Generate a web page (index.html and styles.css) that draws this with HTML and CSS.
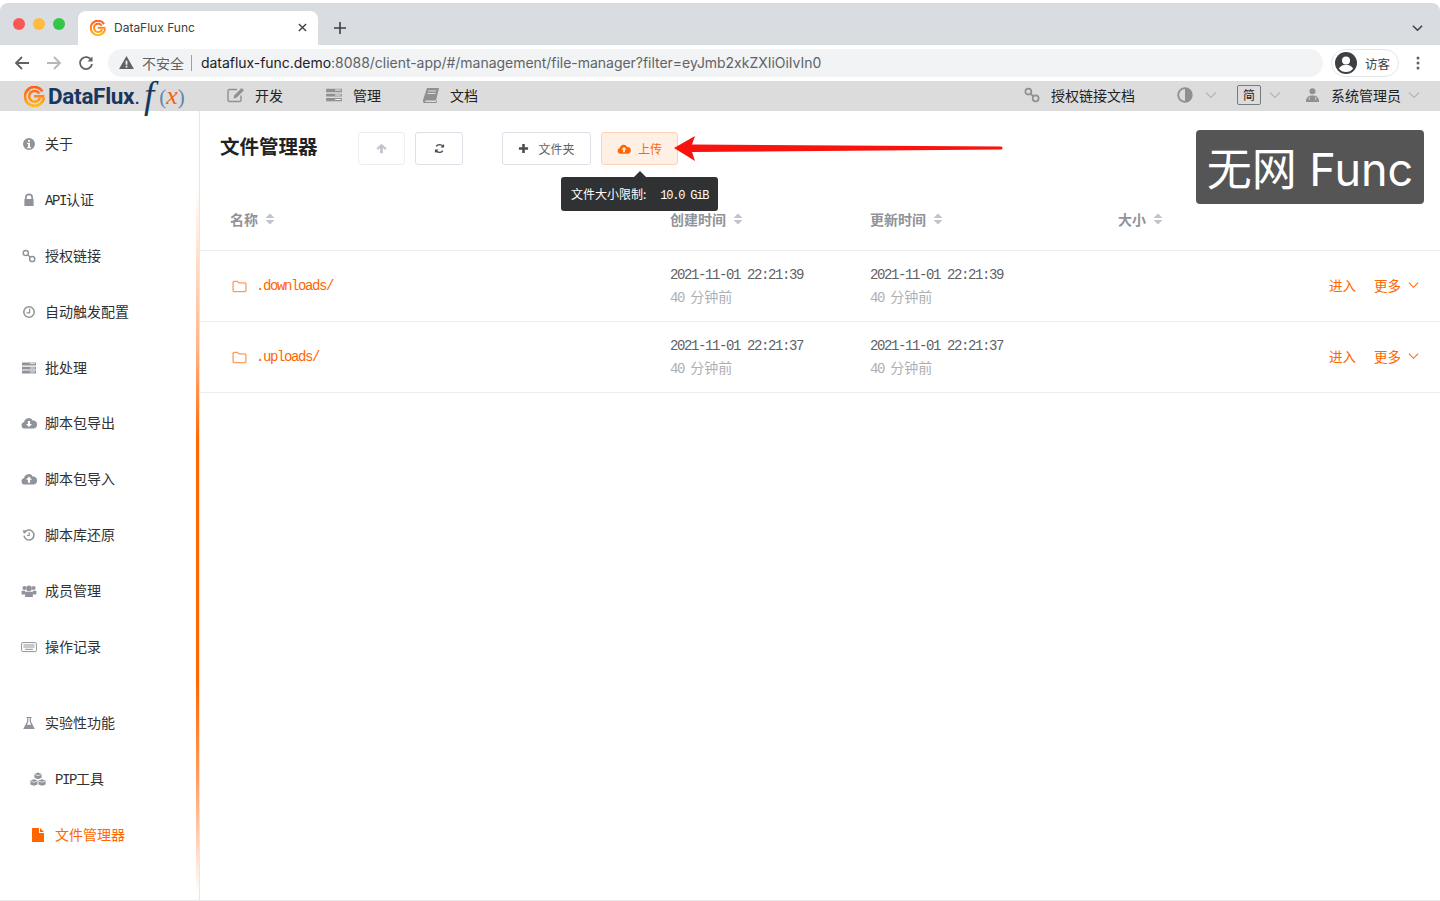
FILE: index.html
```html
<!DOCTYPE html>
<html lang="zh-CN">
<head>
    <meta charset="UTF-8">
    <title>DataFlux Func</title>
    <link rel="stylesheet" href="styles.css">
</head>
<body>
    <svg class="defs" width="0" height="0">
        <defs>
            <linearGradient id="logoGrad" gradientUnits="userSpaceOnUse" x1="0" y1="0" x2="0" y2="20">
                <stop offset="0" stop-color="#ff5a1f"/>
                <stop offset="0.55" stop-color="#ff8a1a"/>
                <stop offset="1" stop-color="#ffc21f"/>
            </linearGradient>
            <symbol id="i-gmark" viewBox="0 0 20 20">
                <path d="M17.6 5.2A9 9 0 1 0 18.9 11" fill="none" stroke="url(#logoGrad)" stroke-width="2.6"/>
                <path d="M14.6 7.2A5.2 5.2 0 1 0 15.1 11.4" fill="none" stroke="url(#logoGrad)" stroke-width="2.4"/>
                <path d="M9.6 9.8H19.4" fill="none" stroke="url(#logoGrad)" stroke-width="2.4"/>
            </symbol>
            <symbol id="i-info" viewBox="0 0 14 14">
                <path fill-rule="evenodd" d="M7 1a6 6 0 1 0 0 12A6 6 0 0 0 7 1zM6 2.9h2v1.8H6zM5.2 5.7H8v4.2h.9v1.3H5.2V9.9h.9V7h-.9z"/>
            </symbol>
            <symbol id="i-lock" viewBox="0 0 14 14">
                <path fill-rule="evenodd" d="M3 6V4.6a4 4 0 0 1 8 0V6h.6v7H2.4V6zM4.7 6h4.6V4.6a2.3 2.3 0 0 0-4.6 0z"/>
            </symbol>
            <symbol id="i-link" viewBox="0 0 14 14">
                <g fill="none" stroke="currentColor" stroke-width="1.5">
                    <circle cx="3.8" cy="4" r="2.6"/>
                    <circle cx="10.2" cy="10" r="2.6"/>
                    <path d="M5.6 5.8l2.8 2.5"/>
                </g>
            </symbol>
            <symbol id="i-clock" viewBox="0 0 14 14">
                <circle cx="7" cy="7" r="5.2" fill="none" stroke="currentColor" stroke-width="1.5"/>
                <path d="M7.6 3.8v4H4.6" fill="none" stroke="currentColor" stroke-width="1.2"/>
            </symbol>
            <symbol id="i-tasks" viewBox="0 0 16 14">
                <path d="M1 1.5h14v3H1zM1 5.8h14v2.6H1zM1 9.6h14v3H1z"/>
                <path d="M9 2.6h5M9 7h5M9 11h5" stroke="#fff" stroke-width=".8"/>
            </symbol>
            <symbol id="i-cloud-down" viewBox="0 0 16 14">
                <path fill-rule="evenodd" d="M4 12.6a3.4 3.4 0 0 1-.9-6.7A4.6 4.6 0 0 1 11.7 4.6a3.2 3.2 0 0 1 .6 8zM6.9 5v3H5l3 3 3-3H9.1V5z"/>
            </symbol>
            <symbol id="i-cloud-up" viewBox="0 0 16 14">
                <path fill-rule="evenodd" d="M4 12.6a3.4 3.4 0 0 1-.9-6.7A4.6 4.6 0 0 1 11.7 4.6a3.2 3.2 0 0 1 .6 8zM8 4.6L5 7.7h1.9v3h2.2v-3H11z"/>
            </symbol>
            <symbol id="i-history" viewBox="0 0 14 14">
                <path d="M2.6 4.6A5 5 0 1 1 2 7.6" fill="none" stroke="currentColor" stroke-width="1.5"/>
                <path d="M.6 2.2l4.2.4-2.8 3.4z"/>
                <path d="M7.2 4.2v3.3H5" fill="none" stroke="currentColor" stroke-width="1.2"/>
            </symbol>
            <symbol id="i-users" viewBox="0 0 16 14">
                <circle cx="3.4" cy="4" r="2"/>
                <circle cx="12.6" cy="4" r="2"/>
                <circle cx="8" cy="4.4" r="2.8"/>
                <path d="M.6 6.8h3.6l.4 3.6H.6zM11.8 6.8h3.6v3.6h-4zM4.6 7.8h6.8l.6 5.2H4z"/>
            </symbol>
            <symbol id="i-keyboard" viewBox="0 0 16 14">
                <rect x=".6" y="2.6" width="14.8" height="9" rx="1" fill="none" stroke="currentColor"/>
                <path d="M2.5 5h11M2.5 7h11M4 9.3h8" fill="none" stroke="currentColor"/>
            </symbol>
            <symbol id="i-flask" viewBox="0 0 14 14">
                <path fill-rule="evenodd" d="M4.4 1h5.2v1H8.9v3.6L12.8 13H1.2l3.900-7.400V2h-.7zM6.300 2v3.900L4.800 8.800h4.400L7.700 5.900V2z"/>
            </symbol>
            <symbol id="i-cubes" viewBox="0 0 18 14">
                <path d="M9 .6l3.600 1.400v3.800L9 7.200 5.400 5.800V2zM5 7.200l3.500 1.400v3.800L5 13.800 1.400 12.400V8.600zM13 7.200l3.600 1.400v3.800L13 13.800l-3.500-1.400V8.600z"/>
                <path d="M5.800 2.400L9 3.700l3.200-1.300M1.800 9L5 10.300 8.200 9M9.800 9l3.200 1.300L16.200 9" fill="none" stroke="#fff" stroke-width=".7"/>
            </symbol>
            <symbol id="i-file" viewBox="0 0 12 14">
                <path d="M0 0h7v5h5v9H0zM8 0l4 4H8z"/>
            </symbol>
            <symbol id="i-folder" viewBox="0 0 14 12">
                <path d="M1 2.200a1 1 0 0 1 1-1h3l1.400 1.500H12a1 1 0 0 1 1 1v6a1 1 0 0 1-1 1H2a1 1 0 0 1-1-1z" fill="none" stroke="currentColor" stroke-width="1.2"/>
            </symbol>
            <symbol id="i-caret" viewBox="0 0 10 12">
                <path d="M5 .5l4.500 4.500H.5zM5 11.500L.5 7h9z"/>
            </symbol>
            <symbol id="i-chev" viewBox="0 0 12 8">
                <path d="M1 1.500l5 5 5-5" fill="none" stroke="currentColor" stroke-width="1.1"/>
            </symbol>
        </defs>
    </svg>

    <!-- Browser tabs -->
    <div class="tabstrip">
        <div class="lights">
            <span class="light red"></span>
            <span class="light yellow"></span>
            <span class="light green"></span>
        </div>
        <div class="tab">
            <svg class="favicon"><use href="#i-gmark"/></svg>
            <span class="tab-title">DataFlux Func</span>
            <svg class="tab-close" viewBox="0 0 10 10"><path d="M1 1l8 8M9 1l-8 8"/></svg>
        </div>
        <svg class="tab-new" viewBox="0 0 12 12"><path d="M6 0v12M0 6h12"/></svg>
        <svg class="strip-chev" viewBox="0 0 12 8"><path d="M1 1.500l5 5 5-5"/></svg>
    </div>

    <!-- Browser toolbar -->
    <div class="toolbar">
        <svg class="tool-btn" viewBox="0 0 16 16"><path d="M15 8H2M8 2L2 8l6 6"/></svg>
        <svg class="tool-btn tool-off" viewBox="0 0 16 16"><path d="M1 8h13M8 2l6 6-6 6"/></svg>
        <svg class="tool-btn" viewBox="0 0 16 16"><path d="M13.500 5.500A6 6 0 1 0 14 9"/><path class="solid" d="M14.500 1.500v5h-5z"/></svg>
        <div class="omnibox">
            <svg class="warn" viewBox="0 0 16 14"><path fill-rule="evenodd" d="M8 0l8 14H0zM7 5v4.500h2V5zM7 10.500v2h2v-2z"/></svg>
            <span class="insecure">不安全</span>
            <span class="omni-sep"></span>
            <span class="url"><span class="url-host">dataflux-func.demo</span>:8088/client-app/#/management/file-manager?filter=eyJmb2xkZXIiOiIvIn0</span>
        </div>
        <div class="profile">
            <svg class="avatar" viewBox="0 0 22 22"><circle cx="11" cy="11" r="11" fill="#3c4043"/><circle cx="11" cy="8.500" r="4" fill="#fff"/><path d="M3.800 16.500c2-3 4.600-3.800 7.200-3.800s5.200.8 7.200 3.800A9 9 0 0 1 11 20a9 9 0 0 1-7.200-3.500z" fill="#fff"/></svg>
            <span>访客</span>
        </div>
        <svg class="dots" viewBox="0 0 4 14"><circle cx="2" cy="2" r="1.500"/><circle cx="2" cy="7" r="1.500"/><circle cx="2" cy="12" r="1.500"/></svg>
    </div>

    <!-- App navigation -->
    <div class="navbar">
        <div class="logo">
            <svg class="logo-mark"><use href="#i-gmark"/></svg>
            <span class="logo-text">DataFlux<span class="logo-dot">.</span></span>
            <span class="logo-f">f</span>
            <span class="logo-x">(<i>x</i>)</span>
        </div>
        <a class="nav-item nav-dev">
            <svg class="nav-icon" viewBox="0 0 18 16"><path d="M14 8.500V13a1.500 1.500 0 0 1-1.500 1.500h-10A1.500 1.500 0 0 1 1 13V4a1.500 1.500 0 0 1 1.500-1.500H10" fill="none" stroke="currentColor" stroke-width="1.400"/><path d="M14.500 1L17 3.300 9.500 10.800l-3 .7.700-3z"/></svg>
            <span>开发</span>
        </a>
        <a class="nav-item nav-manage">
            <svg class="nav-icon" viewBox="0 0 16 14"><use href="#i-tasks"/></svg>
            <span>管理</span>
        </a>
        <a class="nav-item nav-docs">
            <svg class="nav-icon" viewBox="0 0 18 16"><path d="M5 1h12l-3 12.500H3.500a1.200 1.200 0 0 0 0 1.500H14l.6-1.800.7.300-.8 2.500H2.500C1 16 .5 14 1.200 12.500z"/><path d="M6 4h8M5.500 6.500h8" stroke="#dcdcdc"/></svg>
            <span>文档</span>
        </a>
        <div class="nav-right">
            <a class="nav-item nav-auth">
                <svg class="nav-icon" viewBox="0 0 14 14"><use href="#i-link"/></svg>
                <span>授权链接文档</span>
            </a>
            <svg class="theme-icon" viewBox="0 0 16 16"><circle cx="8" cy="8" r="6.800" fill="none" stroke="currentColor" stroke-width="1.800"/><path d="M8 1.200a6.800 6.800 0 0 1 0 13.600z"/></svg>
            <svg class="nav-chev chev-theme"><use href="#i-chev"/></svg>
            <span class="lang">简</span>
            <svg class="nav-chev chev-lang"><use href="#i-chev"/></svg>
            <svg class="user-icon" viewBox="0 0 16 16"><circle cx="8" cy="4" r="3.200"/><path d="M1 15.500c0-5 2.500-7 7-7s7 2 7 7z"/><path d="M4.500 10v3M11.500 10v3" stroke="#dcdcdc"/></svg>
            <span class="nav-user">系统管理员</span>
            <svg class="nav-chev"><use href="#i-chev"/></svg>
        </div>
    </div>

    <div class="app">
        <aside class="sidebar">
            <a class="side-item"><svg class="side-icon"><use href="#i-info"/></svg><span>关于</span></a>
            <a class="side-item"><svg class="side-icon"><use href="#i-lock"/></svg><span><span class="lat">API</span>认证</span></a>
            <a class="side-item"><svg class="side-icon"><use href="#i-link"/></svg><span>授权链接</span></a>
            <a class="side-item"><svg class="side-icon"><use href="#i-clock"/></svg><span>自动触发配置</span></a>
            <a class="side-item"><svg class="side-icon"><use href="#i-tasks"/></svg><span>批处理</span></a>
            <a class="side-item"><svg class="side-icon"><use href="#i-cloud-down"/></svg><span>脚本包导出</span></a>
            <a class="side-item"><svg class="side-icon"><use href="#i-cloud-up"/></svg><span>脚本包导入</span></a>
            <a class="side-item"><svg class="side-icon"><use href="#i-history"/></svg><span>脚本库还原</span></a>
            <a class="side-item"><svg class="side-icon"><use href="#i-users"/></svg><span>成员管理</span></a>
            <a class="side-item"><svg class="side-icon"><use href="#i-keyboard"/></svg><span>操作记录</span></a>
            <div class="side-gap"></div>
            <a class="side-item"><svg class="side-icon"><use href="#i-flask"/></svg><span>实验性功能</span></a>
            <a class="side-item sub"><svg class="side-icon"><use href="#i-cubes"/></svg><span><span class="lat">PIP</span>工具</span></a>
            <a class="side-item sub active"><svg class="side-icon"><use href="#i-file"/></svg><span>文件管理器</span></a>
        </aside>

        <main class="content">
            <div class="page-head">
                <h1>文件管理器</h1>
                <button class="btn btn-icon btn-off"><svg viewBox="0 0 12 12"><path d="M6 .8l5.500 5-1.700 1.700-2.300-2.300v6H4.500v-6L2.200 7.500.5 5.800z"/></svg></button>
                <button class="btn btn-icon btn-refresh"><svg viewBox="0 0 12 12"><path d="M10.200 4.200A4.500 4.500 0 0 0 2.400 3.800M1.800 7.800a4.500 4.500 0 0 0 7.800.4" fill="none" stroke="currentColor" stroke-width="1.500"/><path d="M11 1v4H7zM1 11V7h4z"/></svg></button>
                <button class="btn btn-folder"><svg viewBox="0 0 12 12"><path d="M4.600 1h2.800v3.600H11v2.800H7.400V11H4.600V7.400H1V4.600h3.600z"/></svg>文件夹</button>
                <button class="btn btn-upload"><svg viewBox="0 0 16 14"><use href="#i-cloud-up"/></svg>上传</button>
            </div>

            <div class="grid grid-head">
                <div>名称<svg class="caret"><use href="#i-caret"/></svg></div>
                <div>创建时间<svg class="caret"><use href="#i-caret"/></svg></div>
                <div>更新时间<svg class="caret"><use href="#i-caret"/></svg></div>
                <div>大小<svg class="caret"><use href="#i-caret"/></svg></div>
                <div></div>
            </div>

            <div class="grid row">
                <a class="file"><svg class="folder"><use href="#i-folder"/></svg><span class="lat">.downloads/</span></a>
                <div class="when"><div class="stamp-line lat">2021-11-01 22:21:39</div><div class="stamp-line ago"><span class="lat">40</span> 分钟前</div></div>
                <div class="when"><div class="stamp-line lat">2021-11-01 22:21:39</div><div class="stamp-line ago"><span class="lat">40</span> 分钟前</div></div>
                <div></div>
                <div class="actions"><a>进入</a><a>更多</a><svg class="act-chev"><use href="#i-chev"/></svg></div>
            </div>
            <div class="grid row">
                <a class="file"><svg class="folder"><use href="#i-folder"/></svg><span class="lat">.uploads/</span></a>
                <div class="when"><div class="stamp-line lat">2021-11-01 22:21:37</div><div class="stamp-line ago"><span class="lat">40</span> 分钟前</div></div>
                <div class="when"><div class="stamp-line lat">2021-11-01 22:21:37</div><div class="stamp-line ago"><span class="lat">40</span> 分钟前</div></div>
                <div></div>
                <div class="actions"><a>进入</a><a>更多</a><svg class="act-chev"><use href="#i-chev"/></svg></div>
            </div>

            <!-- Overlays -->
            <div class="tooltip">文件大小限制:<span class="lat tip-size">10.0 GiB</span></div>
            <svg class="red-arrow" viewBox="0 0 330 30"><path d="M0 15L21 3l-3 8.500L327 13.500a1.500 1.500 0 0 1 0 3L18 19l3 9z"/></svg>
            <div class="stamp">无网 Func</div>
        </main>
    </div>
</body>
</html>
```

FILE: styles.css
```css
* {
    box-sizing: border-box;
}
html, body {
    margin: 0;
    height: 901px;
    overflow: hidden;
}
body {
    font-family: "Liberation Mono", "Noto Sans CJK SC", monospace;
    font-size: 14px;
    color: #303133;
    background: #fff;
    display: flex;
    flex-direction: column;
}
a {
    color: inherit;
    text-decoration: none;
}
svg {
    display: block;
    fill: currentColor;
    flex: none;
}
.defs {
    position: absolute;
}
.lat {
    font-family: "Liberation Mono", monospace;
    font-size: 14px;
    letter-spacing: -1.4px;
}

/* browser tabs */
.tabstrip {
    height: 42px;
    margin-top: 3px;
    background: #d9dce1;
    border-radius: 8px 8px 0 0;
    display: flex;
    align-items: flex-end;
    flex: none;
}
.lights {
    display: flex;
    gap: 8px;
    padding: 0 0 15px 13px;
    width: 78px;
}
.light {
    width: 12px;
    height: 12px;
    border-radius: 50%;
}
.red { background: #fc5753; }
.yellow { background: #fdbc40; }
.green { background: #33c748; }
.tab {
    width: 240px;
    height: 34px;
    background: #fff;
    border-radius: 8px 8px 0 0;
    display: flex;
    align-items: center;
    padding: 0 11px 1px 12px;
    font-family: "Inter", sans-serif;
    font-size: 12px;
    color: #3c4043;
}
.favicon {
    width: 16px;
    height: 16px;
    margin-right: 8px;
}
.tab-title {
    flex: 1;
}
.tab-close {
    width: 9px;
    height: 9px;
    fill: none;
    stroke: #3c4043;
    stroke-width: 1.5;
}
.tab-new {
    width: 12px;
    height: 12px;
    margin: 0 0 11px 16px;
    fill: none;
    stroke: #3c4043;
    stroke-width: 1.6;
}
.strip-chev {
    width: 11px;
    height: 8px;
    margin: 0 17px 13px auto;
    fill: none;
    stroke: #3c4043;
    stroke-width: 1.6;
}

/* browser toolbar */
.toolbar {
    height: 36px;
    background: #fff;
    display: flex;
    align-items: center;
    padding-left: 14px;
    flex: none;
}
.tool-btn {
    width: 16px;
    height: 16px;
    margin-right: 16px;
    fill: none;
    stroke: #5f6368;
    stroke-width: 1.8;
}
.tool-btn .solid {
    fill: #5f6368;
    stroke: none;
}
.tool-off {
    stroke: #b4b7bb;
}
.omnibox {
    width: 1215px;
    height: 28px;
    margin-left: -2px;
    border-radius: 14px;
    background: #f1f3f4;
    display: flex;
    align-items: center;
    padding: 0 0 1px 11px;
    font-family: "Inter", "Noto Sans CJK SC", sans-serif;
    font-size: 14px;
    letter-spacing: -0.03px;
    color: #5f6368;
}
.warn {
    width: 15px;
    height: 13px;
    color: #5f6368;
    margin-right: 8px;
}
.omni-sep {
    width: 1px;
    height: 16px;
    background: #9aa0a6;
    margin: 0 9px 0 7px;
}
.url-host {
    color: #202124;
}
.profile {
    width: 68px;
    height: 28px;
    margin-left: 8px;
    border: 1px solid #e3e5e8;
    border-radius: 14px;
    display: flex;
    align-items: center;
    gap: 8px;
    padding-left: 3px;
    font-family: "Noto Sans CJK SC", sans-serif;
    font-size: 12.5px;
    color: #3c4043;
}
.avatar {
    width: 22px;
    height: 22px;
}
.dots {
    width: 4px;
    height: 14px;
    margin-left: 17px;
    color: #5f6368;
}

/* app nav */
.navbar {
    height: 30px;
    background: #dcdcdc;
    display: flex;
    align-items: center;
    padding: 0 0 2px 24px;
    flex: none;
    color: #222;
}
.logo {
    width: 203px;
    display: flex;
    align-items: center;
    height: 30px;
    margin-top: 2px;
}
.logo-mark {
    width: 21px;
    height: 21px;
    margin-right: 3px;
}
.logo-text {
    font-family: "Roboto", sans-serif;
    font-weight: 700;
    font-size: 22.5px;
    letter-spacing: -0.3px;
    color: #17375e;
}
.logo-dot {
    font-weight: 400;
}
.logo-f {
    font-family: "Liberation Serif", serif;
    font-style: italic;
    font-size: 37px;
    line-height: 30px;
    color: #17375e;
    margin-left: 4px;
}
.logo-x {
    font-family: "Liberation Serif", serif;
    font-size: 21px;
    color: #5d86ad;
    margin-left: 5px;
}
.logo-x i {
    color: #f0641e;
    font-size: 26px;
}
.nav-item {
    display: flex;
    align-items: center;
    font-family: "Noto Sans CJK SC", sans-serif;
}
.nav-icon {
    width: 18px;
    height: 16px;
    margin-right: 10px;
    color: #8e9093;
}
.nav-dev { width: 98px; }
.nav-manage { width: 97px; }
.nav-right {
    margin-left: auto;
    display: flex;
    align-items: center;
    font-family: "Noto Sans CJK SC", sans-serif;
    padding-right: 20px;
}
.nav-auth {
    width: 154px;
}
.theme-icon {
    width: 16px;
    height: 16px;
    color: #8e9093;
}
.nav-chev {
    width: 12px;
    height: 8px;
    color: #b5b5b5;
}
.chev-theme {
    margin: 0 20px 0 12px;
}
.lang {
    width: 24px;
    height: 20px;
    border: 1px solid #77797c;
    border-radius: 2px;
    font-size: 12px;
    line-height: 18px;
    text-align: center;
}
.chev-lang {
    margin: 0 24px 0 8px;
}
.user-icon {
    width: 15px;
    height: 16px;
    color: #8e9093;
    margin-right: 11px;
}
.nav-user {
    margin-right: 7px;
}

/* main layout */
.app {
    flex: 1;
    display: flex;
    min-height: 0;
    border-bottom: 1px solid #e8e8e8;
}
.sidebar {
    width: 199px;
    flex: none;
    padding-top: 4px;
    border-right: 3px solid;
    border-image: linear-gradient(to bottom, transparent 10%, #ffb58a 30%, #ff6600 42%, #ff6600 72%, #ffa066 85%, transparent 99%) 1;
}
.side-item {
    height: 55.9px;
    display: flex;
    align-items: center;
    font-family: "Liberation Mono", "Noto Sans CJK SC", monospace;
}
.side-icon {
    width: 16px;
    height: 14px;
    margin: 2px 8px 0 21px;
    color: #909399;
}
.side-gap {
    height: 20px;
}
.sub .side-icon {
    width: 18px;
    margin: 2px 8px 0 29px;
}
.active {
    color: #ff6600;
}
.active .side-icon {
    color: #ff6600;
}

.content {
    flex: 1;
    position: relative;
    border-left: 1px solid #e4e7ed;
    min-width: 0;
}
.page-head {
    height: 79px;
    padding: 21px 0 0 20px;
    display: flex;
    align-items: flex-start;
}
h1 {
    margin: 0 40px 0 0;
    width: 98px;
    font-family: "Noto Sans CJK SC", sans-serif;
    font-size: 19.5px;
    line-height: 28px;
    font-weight: 700;
    color: #222;
    white-space: nowrap;
}
.btn {
    height: 33px;
    background: #fff;
    border: 1px solid #dcdfe6;
    border-radius: 3px;
    font-family: "Noto Sans CJK SC", sans-serif;
    font-size: 12px;
    color: #606266;
    padding: 0;
    display: flex;
    align-items: center;
    justify-content: center;
}
.btn svg {
    width: 11px;
    height: 11px;
}
.btn-icon {
    width: 47px;
}
.btn-off {
    border-color: #ebeef5;
    color: #c0c4cc;
}
.btn-refresh {
    width: 48px;
    margin: 0 39px 0 10px;
    color: #4a4c50;
}
.btn-folder {
    width: 89px;
    margin-right: 10px;
    gap: 9px;
}
.btn-folder svg {
    color: #4a4c50;
}
.btn-upload {
    width: 77px;
    background: #fff0e6;
    border-color: #ffd1b3;
    color: #ff6600;
    gap: 7px;
}
.btn-upload svg {
    width: 14px;
    height: 12px;
}

/* table */
.grid {
    display: grid;
    grid-template-columns: 440px 200px 248px 1fr auto;
    padding: 0 21px 0 30px;
    align-items: center;
    border-bottom: 1px solid #ebeef5;
}
.grid-head {
    height: 61px;
    padding-bottom: 3px;
    font-family: "Noto Sans CJK SC", sans-serif;
    font-weight: 700;
    color: #909399;
}
.grid-head > div {
    display: flex;
    align-items: center;
}
.caret {
    width: 10px;
    height: 12px;
    margin-left: 7px;
    color: #c0c4cc;
}
.row {
    height: 71px;
}
.file {
    display: flex;
    align-items: center;
    color: #ff6600;
}
.folder {
    width: 15px;
    height: 13px;
    margin: 0 9px 0 2px;
    color: #ff9a5c;
}
.when {
    color: #606266;
}
.stamp-line {
    height: 23px;
    line-height: 23px;
    white-space: nowrap;
}
.ago {
    margin-top: -2px;
    color: #aeb0b5;
    font-family: "Noto Sans CJK SC", sans-serif;
    font-size: 14px;
}
.ago .lat {
    margin-right: 3px;
}
.actions {
    display: flex;
    align-items: center;
    gap: 18px;
    padding-bottom: 3px;
    color: #ff6600;
    font-family: "Noto Sans CJK SC", sans-serif;
    font-size: 13.5px;
}
.act-chev {
    width: 11px;
    height: 8px;
    margin-left: -11px;
}

/* overlays */
.tooltip {
    position: absolute;
    left: 361px;
    top: 66px;
    width: 157px;
    height: 34px;
    background: #303133;
    border-radius: 3px;
    color: #fff;
    font-family: "Noto Sans CJK SC", sans-serif;
    font-size: 12px;
    line-height: 34px;
    padding-left: 10px;
    white-space: nowrap;
}
.tooltip::before {
    content: "";
    position: absolute;
    left: 73px;
    top: -6px;
    border: 6px solid transparent;
    border-top: 0;
    border-bottom-color: #303133;
}
.tip-size {
    font-size: 12px;
    letter-spacing: -1.2px;
    margin-left: 14px;
}
.red-arrow {
    position: absolute;
    left: 474px;
    top: 22px;
    width: 330px;
    height: 30px;
    color: #f9130e;
}
.stamp {
    position: absolute;
    left: 996px;
    top: 19px;
    width: 228px;
    height: 74px;
    background: #555;
    border-radius: 4px;
    color: #fff;
    font-family: "Inter", "Noto Sans CJK SC", sans-serif;
    font-size: 45px;
    line-height: 79px;
    text-align: center;
    white-space: nowrap;
}
```
